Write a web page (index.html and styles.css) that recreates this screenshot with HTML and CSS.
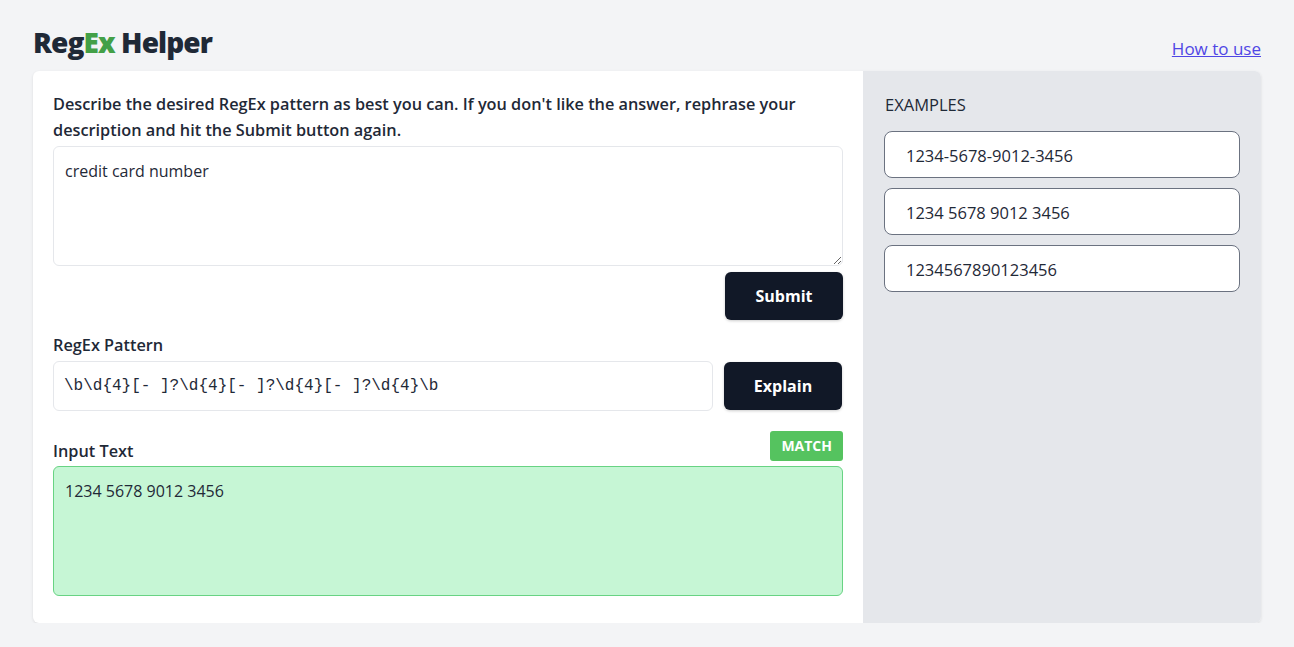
FILE: index.html
```html
<!DOCTYPE html>
<html lang="en">
<head>
  <meta charset="UTF-8" />
  <title>RegEx Helper</title>
  <meta name="viewport" content="width=device-width, initial-scale=1.0" />
  <link rel="stylesheet" href="styles.css">
</head>
<body>
  <div class="page">
    <header class="top">
      <h1 class="logo">Reg<span class="logo-ex">Ex</span> Helper</h1>
      <a class="help-link" href="#">How to use</a>
    </header>

    <main class="card">
      <section class="main-col">
        <label class="label" for="desc">Describe the desired RegEx pattern as best you can. If you don't like the answer, rephrase your description and hit the Submit button again.</label>
        <textarea id="desc" class="desc-box">credit card number</textarea>
        <div class="submit-row">
          <button class="dark-button">Submit</button>
        </div>

        <label class="label pattern-label" for="pattern">RegEx Pattern</label>
        <div class="pattern-row">
          <input id="pattern" class="pattern-input" value="\b\d{4}[- ]?\d{4}[- ]?\d{4}[- ]?\d{4}\b">
          <button class="dark-button">Explain</button>
        </div>

        <div class="input-head">
          <label class="label" for="input-text">Input Text</label>
          <span class="match-badge">MATCH</span>
        </div>
        <textarea id="input-text" class="input-box">1234 5678 9012 3456</textarea>
      </section>

      <aside class="side-col">
        <h2 class="side-title">EXAMPLES</h2>
        <div class="example">1234-5678-9012-3456</div>
        <div class="example">1234 5678 9012 3456</div>
        <div class="example">1234567890123456</div>
      </aside>
    </main>
  </div>
</body>
</html>
```

FILE: styles.css
```css
body {
  margin: 0;
  background-color: #f3f4f6;
  font-family: 'Open Sans', 'Noto Sans', sans-serif;
  color: #1f2937;
}
.page {
  padding: 0 33px;
}
.top {
  display: flex;
  justify-content: space-between;
  align-items: flex-end;
  height: 71px;
}
.logo {
  margin: 0 0 10px 0;
  font-size: 28px;
  font-weight: 800;
  letter-spacing: -0.9px;
  color: #1f2937;
}
.logo-ex {
  color: #43a047;
}
.help-link {
  font-size: 17px;
  color: #4f46e5;
  margin-bottom: 11px;
}
.card {
  display: flex;
  background: #fff;
  border-radius: 6px;
  box-shadow: 0 1px 3px rgba(0, 0, 0, 0.1);
  overflow: hidden;
  height: 552px;
}
.main-col {
  width: 790px;
  padding: 20px 20px 0 20px;
  display: flex;
  flex-direction: column;
}
.label {
  display: block;
  font-size: 16.3px;
  font-weight: 600;
  line-height: 26px;
  color: #1f2937;
}
textarea,
input {
  font-family: inherit;
  font-size: 16px;
  box-sizing: border-box;
  color: #1f2937;
}
.desc-box {
  margin-top: 3px;
  width: 790px;
  height: 120px;
  border: 1px solid #e5e7eb;
  border-radius: 6px;
  padding: 13px 11px;
  resize: vertical;
}
.submit-row {
  display: flex;
  justify-content: flex-end;
  margin-top: 6px;
}
.dark-button {
  width: 118px;
  height: 48px;
  background-color: #111827;
  color: white;
  border: none;
  border-radius: 6px;
  font-family: inherit;
  font-size: 16px;
  font-weight: 700;
  box-shadow: 0 1px 3px rgba(0, 0, 0, 0.2);
  cursor: pointer;
}
.pattern-label {
  margin-top: 12px;
}
.pattern-row {
  display: flex;
  align-items: center;
  gap: 11px;
  margin-top: 3px;
}
.pattern-input {
  width: 660px;
  height: 50px;
  border: 1px solid #e5e7eb;
  border-radius: 6px;
  padding: 0 10px;
  font-family: 'Liberation Mono', monospace;
}
.input-head {
  display: flex;
  justify-content: space-between;
  align-items: flex-end;
  margin-top: 20px;
}
.input-head .label {
  margin-bottom: -3px;
}
.match-badge {
  background-color: #55c35f;
  color: white;
  font-size: 14px;
  font-weight: 700;
  padding: 5px 11px;
  border-radius: 3px;
  line-height: 20px;
}
.input-box {
  margin-top: 5px;
  width: 790px;
  height: 130px;
  background-color: #c6f6d5;
  border: 1px solid #68d383;
  border-radius: 6px;
  padding: 13px 11px;
  resize: none;
}
.side-col {
  flex: 1;
  background-color: #e5e7eb;
  padding: 20px 21px 0 21px;
}
.side-title {
  margin: 2px 0 15px 1px;
  font-size: 16.5px;
  font-weight: 500;
  color: #1f2937;
}
.example {
  box-sizing: border-box;
  height: 47px;
  background: white;
  border: 1px solid #6b7280;
  border-radius: 8px;
  margin-bottom: 10px;
  padding: 0 21px;
  line-height: 47px;
  font-size: 16.5px;
  color: #1f2937;
}
```
